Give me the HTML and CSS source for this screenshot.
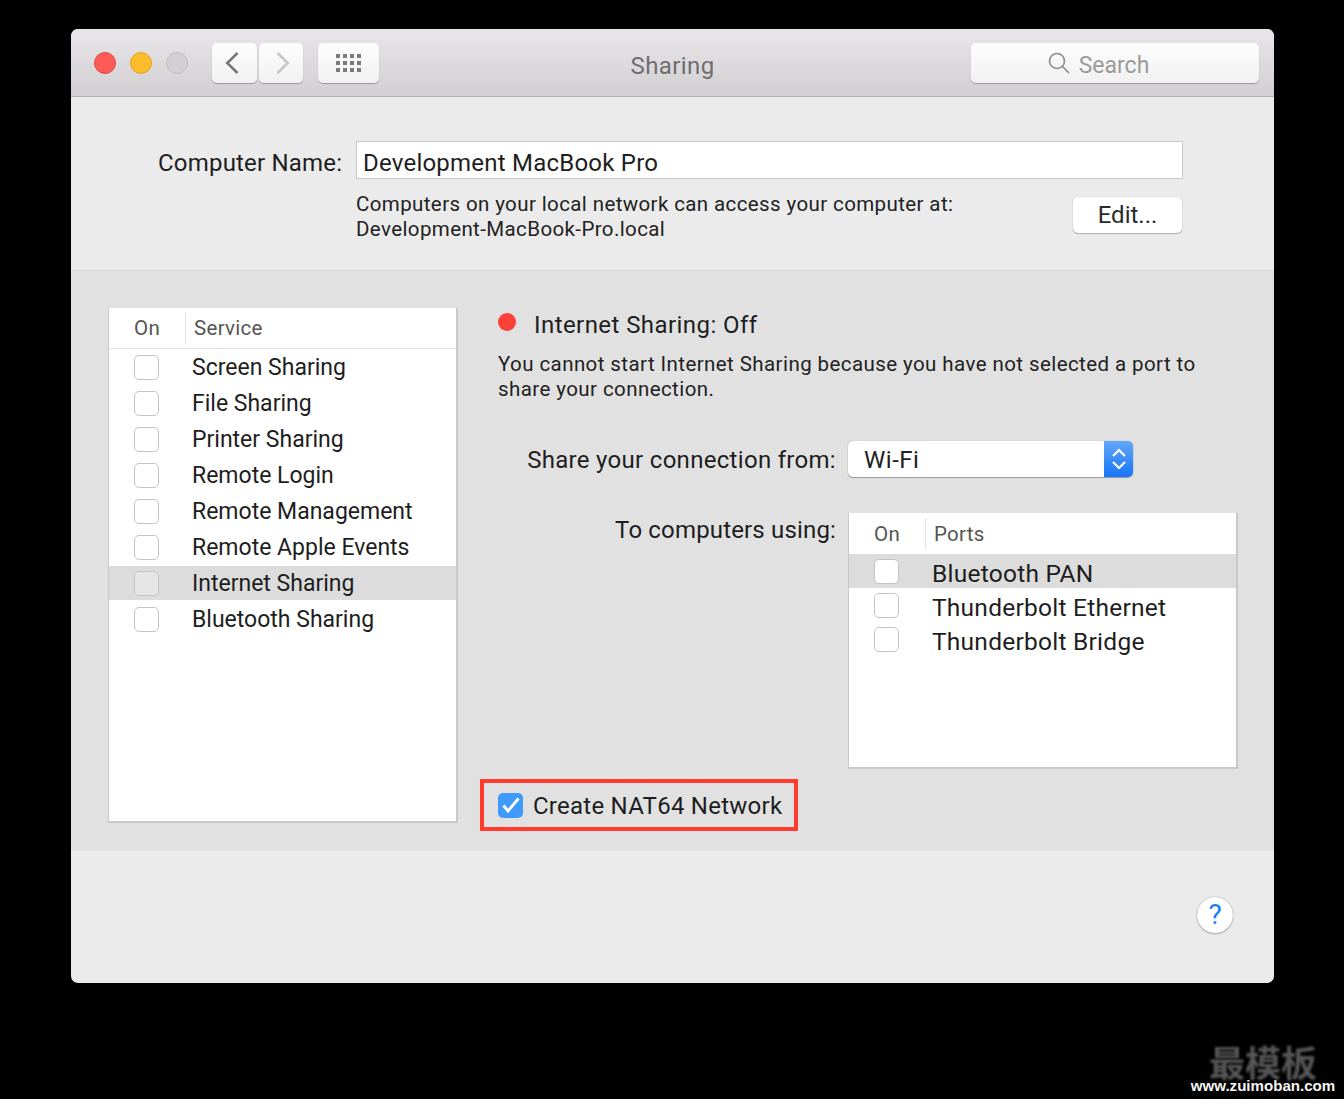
FILE: index.html
```html
<!DOCTYPE html>
<html lang="en">
<head>
<meta charset="utf-8">
<title>Sharing</title>
<link rel="stylesheet" href="styles.css">
</head>
<body>
<main class="window">
  <header class="titlebar">
    <div class="lights">
      <span class="light red"></span>
      <span class="light yellow"></span>
      <span class="light grey"></span>
    </div>
    <div class="nav">
      <button class="tool back"><svg width="14" height="24" viewBox="0 0 14 24"><path d="M12.500 2 2.200 12l10.300 10" fill="none" stroke="#777" stroke-width="2.500"/></svg></button>
      <button class="tool forward"><svg width="14" height="24" viewBox="0 0 14 24"><path d="M1.500 2 11.800 12 1.500 22" fill="none" stroke="#c6c6c6" stroke-width="2.500"/></svg></button>
    </div>
    <button class="tool grid-btn">
      <svg width="28" height="20" viewBox="0 0 28 20" fill="#7b7b7b">
        <rect x="1" y="1" width="4" height="4"/><rect x="8" y="1" width="4" height="4"/><rect x="15" y="1" width="4" height="4"/><rect x="22" y="1" width="4" height="4"/>
        <rect x="1" y="8" width="4" height="4"/><rect x="8" y="8" width="4" height="4"/><rect x="15" y="8" width="4" height="4"/><rect x="22" y="8" width="4" height="4"/>
        <rect x="1" y="15" width="4" height="4"/><rect x="8" y="15" width="4" height="4"/><rect x="15" y="15" width="4" height="4"/><rect x="22" y="15" width="4" height="4"/>
      </svg>
    </button>
    <h1 class="title">Sharing</h1>
    <div class="search">
      <svg width="22" height="22" viewBox="0 0 22 22" fill="none" stroke="#8a8a8a" stroke-width="1.600"><circle cx="9" cy="9" r="7.500"/><path d="m14.500 14.500 6.500 6.500"/></svg>
      <span class="search-text">Search</span>
    </div>
  </header>

  <section class="name-section">
    <div class="name-row">
      <label class="name-label">Computer Name:</label>
      <div class="name-input">Development MacBook Pro</div>
    </div>
    <div class="name-info">
      <p class="body-text">Computers on your local network can access your computer at:<br>Development-MacBook-Pro.local</p>
      <button class="edit">Edit...</button>
    </div>
  </section>

  <section class="panel">
    <div class="list services">
      <div class="list-head"><span class="col-on">On</span><span class="col-name">Service</span></div>
      <div class="row"><span class="check"></span><span>Screen Sharing</span></div>
      <div class="row"><span class="check"></span><span>File Sharing</span></div>
      <div class="row"><span class="check"></span><span>Printer Sharing</span></div>
      <div class="row"><span class="check"></span><span>Remote Login</span></div>
      <div class="row"><span class="check"></span><span>Remote Management</span></div>
      <div class="row"><span class="check"></span><span>Remote Apple Events</span></div>
      <div class="row selected"><span class="check dim"></span><span>Internet Sharing</span></div>
      <div class="row"><span class="check"></span><span>Bluetooth Sharing</span></div>
    </div>

    <div class="detail">
      <div class="status"><span class="dot"></span><span>Internet Sharing: Off</span></div>
      <p class="body-text message">You cannot start Internet Sharing because you have not selected a port to<br>share your connection.</p>
      <div class="form-row from">
        <label class="form-label">Share your connection from:</label>
        <div class="select"><span class="select-value">Wi-Fi</span>
          <span class="stepper"><svg width="18" height="28" viewBox="0 0 18 28" fill="none" stroke="#fff" stroke-width="2.200"><path d="m3 11 6-6 6 6M3 17l6 6 6-6"/></svg></span>
        </div>
      </div>
      <div class="form-row using">
        <label class="form-label">To computers using:</label>
        <div class="list ports">
          <div class="list-head"><span class="col-on">On</span><span class="col-name">Ports</span></div>
          <div class="row port selected-port"><span class="check"></span><span class="port-name">Bluetooth PAN</span></div>
          <div class="row port"><span class="check"></span><span class="port-name">Thunderbolt Ethernet</span></div>
          <div class="row port"><span class="check"></span><span class="port-name">Thunderbolt Bridge</span></div>
        </div>
      </div>
      <div class="nat">
        <span class="check-on"><svg width="20" height="20" viewBox="0 0 20 20" fill="none" stroke="#fff" stroke-width="2.800"><path d="M2.500 10.500 7 16 17.500 3.500"/></svg></span>
        <span class="nat-text">Create NAT64 Network</span>
      </div>
    </div>
  </section>

  <footer class="foot">
    <button class="help">?</button>
  </footer>
</main>
<div class="watermark">
  <div class="wm-cn">最模板</div>
  <div class="wm-url">www.zuimoban.com</div>
</div>
</body>
</html>
```

FILE: styles.css
```css
* { box-sizing: border-box; }
html, body { margin: 0; height: 1099px; overflow: hidden; }
body {
  background: #000;
  padding: 29px 70px 0 71px;
  font-family: Roboto, "Liberation Sans", sans-serif;
  color: #222;
  position: relative;
}
p, h1 { margin: 0; }
button { font-family: inherit; padding: 0; }

.window {
  width: 1203px;
  height: 954px;
  background: #ebebeb;
  border-radius: 7px;
  overflow: hidden;
  display: flex;
  flex-direction: column;
}

.titlebar {
  height: 68px;
  flex: none;
  background: linear-gradient(#e8e6e8, #d1cfd1);
  border-bottom: 1px solid #b5b3b5;
  display: flex;
  align-items: flex-start;
  padding: 14px 15px 0 23px;
  position: relative;
}
.lights { display: flex; gap: 14px; margin-top: 9px; }
.light { width: 22px; height: 22px; border-radius: 50%; border: 1px solid; }
.red { background: #fc5b57; border-color: #e5453f; }
.yellow { background: #fdbc2e; border-color: #e2a41f; }
.grey { background: #d2d0d2; border-color: #bfbdbf; }

.nav { display: flex; gap: 2px; margin-left: 24px; }
.tool {
  height: 40px;
  border: 0;
  border-radius: 5px;
  background: linear-gradient(#fdfdfd, #f1f1f1);
  box-shadow: 0 1px 1px rgba(0,0,0,.28);
  display: flex;
  align-items: center;
  justify-content: center;
}
.back { width: 45px; padding-right: 5px; }
.forward { width: 44px; padding-left: 4px; }
.grid-btn { width: 61px; margin-left: 15px; }

.title {
  position: absolute;
  left: 0;
  right: 0;
  top: 22px;
  text-align: center;
  font-size: 24px;
  line-height: 30px;
  font-weight: 400;
  letter-spacing: .4px;
  color: #6f6d6f;
}
.search {
  margin-left: auto;
  width: 288px;
  height: 40px;
  border-radius: 5px;
  background: linear-gradient(#fdfdfd, #f1f1f1);
  box-shadow: 0 1px 1px rgba(0,0,0,.28);
  display: flex;
  align-items: center;
  justify-content: center;
  gap: 9px;
  font-size: 23px;
  color: #9b9b9b;
  padding-right: 33px;
}
.search-text { padding-top: 4px; }

.name-section {
  height: 173px;
  flex: none;
  padding: 44px 91px 0 87px;
}
.name-row { display: flex; align-items: center; }
.name-label {
  width: 184px;
  font-size: 24px;
  letter-spacing: .2px;
  color: #1e1e1e;
  white-space: nowrap;
  margin-right: 14px;
  padding-top: 6px;
}
.name-input {
  flex: 1;
  height: 38px;
  background: #fff;
  border: 1px solid #c9c9c9;
  padding-left: 6px;
  font-size: 24px;
  letter-spacing: .22px;
  line-height: 42px;
  color: #1e1e1e;
}
.name-info {
  display: flex;
  justify-content: space-between;
  margin: 13px 1px 0 198px;
}
.body-text { font-size: 20.500px; line-height: 25px; letter-spacing: .39px; color: #222; }
.edit {
  width: 109px;
  height: 36px;
  margin-top: 5px;
  border: 0;
  border-radius: 5px;
  background: #fff;
  box-shadow: 0 0 1px rgba(0,0,0,.3), 0 1px 1px rgba(0,0,0,.25);
  font-size: 24px;
  color: #2a2a2a;
}

.panel {
  height: 581px;
  flex: none;
  background: #e1e1e1;
  border-top: 1px solid #dadada;
  border-bottom: 1px solid #e6e6e6;
  padding: 37px 37px 0 37px;
  display: flex;
  gap: 23px;
}
.list {
  background: #fff;
  border-left: 1px solid #c9c9c9;
  border-right: 2px solid #c9c9c9;
  border-bottom: 2px solid #c9c9c9;
}
.services { width: 350px; height: 515px; flex: none; }
.list-head {
  height: 41px;
  display: flex;
  align-items: center;
  border-bottom: 1px solid #e4e4e4;
  font-size: 20.500px;
  letter-spacing: .3px;
  color: #555;
}
.col-on { width: 76px; padding-left: 25px; }
.col-name {
  height: 32px;
  line-height: 32px;
  padding-left: 8px;
  border-left: 1px solid #e4e4e4;
}
.row {
  height: 36px;
  display: flex;
  align-items: center;
  font-size: 23px;
  color: #1e1e1e;
  padding-left: 25px;
  gap: 33px;
}
.selected { background: #dcdcdc; height: 34px; margin: 1px 0; }
.check {
  width: 25px;
  height: 25px;
  background: #fff;
  border: 1px solid #c4c4c4;
  border-radius: 5px;
  flex: none;
}
.check.dim { background: #e6e6e6; }

.detail { flex: 1; display: flex; flex-direction: column; }
.status {
  display: flex;
  align-items: center;
  font-size: 24px;
  letter-spacing: .43px;
  height: 34px;
  color: #1e1e1e;
}
.dot {
  width: 18px;
  height: 18px;
  border-radius: 50%;
  background: #fb4138;
  margin: -6px 18px 0 17px;
}
.message { margin: 10px 0 0 17px; letter-spacing: .42px; }

.form-row { display: flex; }
.form-label {
  width: 355px;
  margin-right: 12px;
  text-align: right;
  font-size: 24px;
  letter-spacing: .16px;
  color: #1e1e1e;
  line-height: 36px;
  white-space: nowrap;
}
.from { margin-top: 39px; height: 36px; }
.from .form-label { line-height: 38px; letter-spacing: .3px; }
.select {
  width: 285px;
  height: 36px;
  background: #fff;
  border-radius: 5px;
  box-shadow: 0 0 1px rgba(0,0,0,.35), 0 1px 1px rgba(0,0,0,.3);
  display: flex;
  justify-content: space-between;
  overflow: hidden;
  font-size: 24px;
  letter-spacing: .5px;
  line-height: 38px;
  color: #222;
}
.select-value { padding-left: 16px; }
.stepper {
  width: 29px;
  background: linear-gradient(#63a8fb, #1575f7);
  display: flex;
  align-items: center;
  justify-content: center;
}
.using { margin-top: 36px; height: 256px; }
.using .form-label { margin-top: -1px; }
.ports { width: 390px; height: 256px; flex: none; }
.port { height: 34px; font-size: 24.500px; letter-spacing: .25px; }
.port-name { padding-top: 5px; }
.ports .list-head { height: 41px; border-bottom: 0; }
.selected-port { background: #dcdcdc; }

.nat {
  width: 318px;
  height: 52px;
  margin: 10px 0 0 -1px;
  border: 4px solid #ff3b30;
  display: flex;
  align-items: center;
  padding-left: 14px;
  gap: 10px;
  font-size: 24px;
  letter-spacing: .25px;
  color: #1e1e1e;
}
.nat-text { padding-top: 2px; }
.check-on {
  width: 25px;
  height: 25px;
  border-radius: 5px;
  background: #3f9bfb;
  display: flex;
  align-items: center;
  justify-content: center;
}

.foot { flex: 1; padding: 46px 41px 0 0; display: flex; justify-content: flex-end; align-items: flex-start; }
.help {
  width: 36px;
  height: 36px;
  border: 0;
  border-radius: 50%;
  background: #fff;
  box-shadow: 0 0 1px rgba(0,0,0,.45), 0 1px 2px rgba(0,0,0,.25);
  color: #1a7cf7;
  font-size: 28px;
  font-weight: 400;
  line-height: 36px;
}

.watermark {
  position: absolute;
  right: 8px;
  bottom: 5px;
  width: 146px;
  text-align: center;
}
.wm-cn {
  font-family: "Noto Sans CJK SC", sans-serif;
  font-size: 36px;
  line-height: 32px;
  font-weight: 700;
  color: #555;
  filter: blur(.8px);
}
.wm-url {
  font-family: "Liberation Sans", sans-serif;
  font-weight: 700;
  font-size: 15.100px;
  line-height: 17px;
  color: #f4f4f4;
  white-space: nowrap;
}
```
